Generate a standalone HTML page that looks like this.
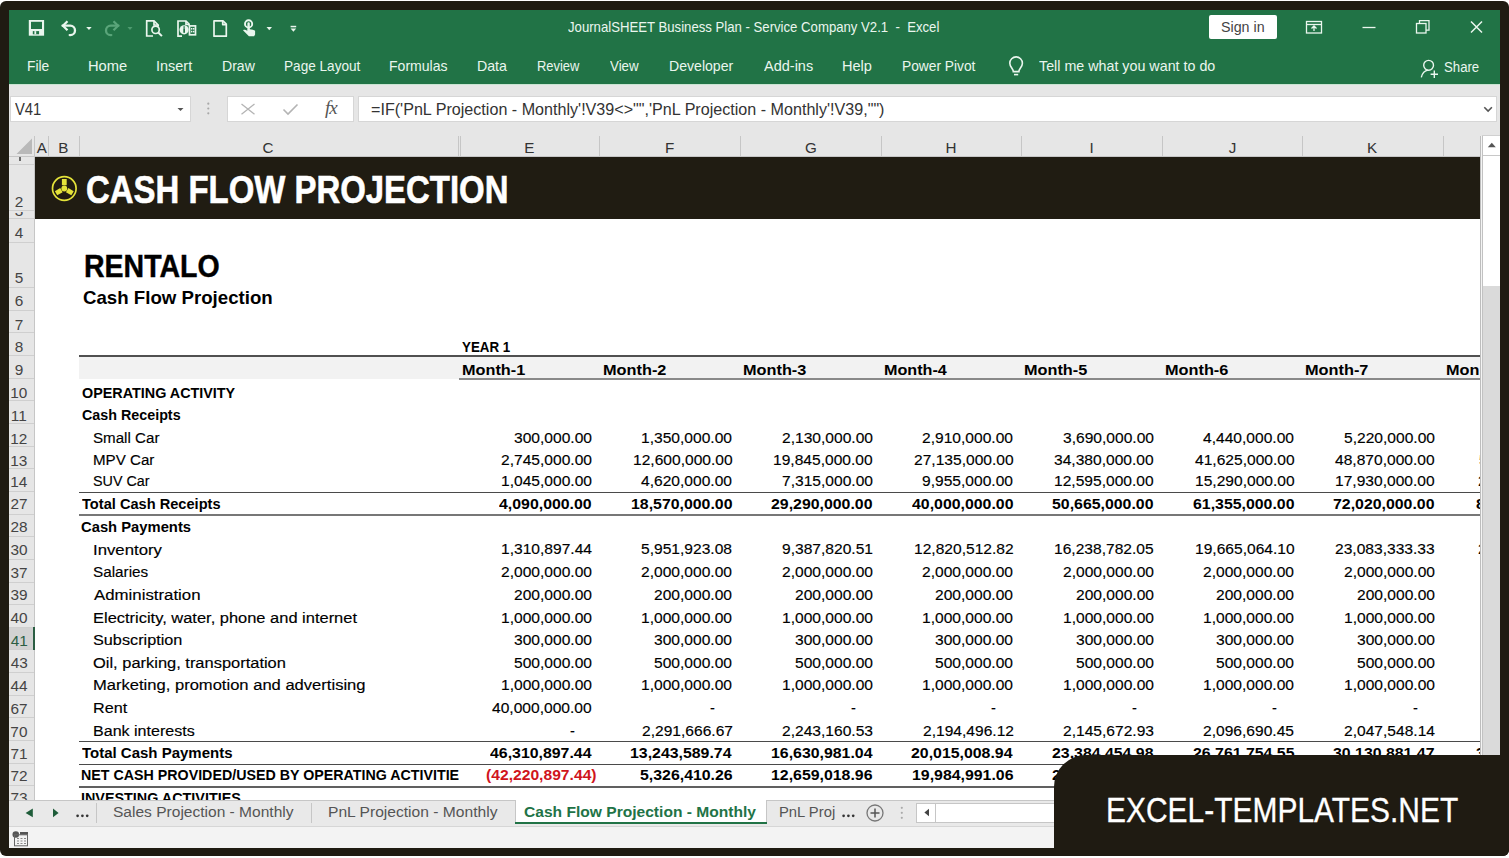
<!DOCTYPE html><html><head><meta charset="utf-8"><style>
html,body{margin:0;padding:0;}
body{width:1509px;height:858px;position:relative;overflow:hidden;background:#fff;font-family:"Liberation Sans",sans-serif;}
body div,body svg{position:absolute;}
.t{white-space:pre;transform-origin:0 0;}
</style></head><body>
<div style="left:0;top:1px;width:1509px;height:855px;background:#1f1b12;border-radius:6px;"></div>
<div style="left:9px;top:10px;width:1491px;height:74px;background:#217346;"></div>
<div style="left:9px;top:84px;width:1491px;height:1px;background:#c9e4d2;"></div>
<div style="left:9px;top:85px;width:1491px;height:72px;background:#e6e6e6;"></div>
<svg style="left:0;top:0" width="320" height="45" viewBox="0 0 320 45">
<rect x="28.8" y="20" width="15.3" height="15.7" fill="#eaf6ee"/>
<rect x="31" y="21.8" width="11" height="7.2" fill="#217346"/>
<rect x="32.8" y="31.1" width="6.3" height="3.2" fill="#217346"/>
<rect x="34.4" y="31.1" width="1.8" height="3.2" fill="#eaf6ee"/>
<g fill="none" stroke="#eaf6ee" stroke-width="2.3">
 <path d="M62.5 25.7h7.8a4.7 4.7 0 0 1 0 9.4h-0.6" stroke-linecap="round"/>
 <path d="M67.5 21.2l-4.6 4.5 4.6 4.5" stroke-linejoin="round"/>
</g>
<path d="M86.2 27.1h5.5l-2.75 3z" fill="#eaf6ee"/>
<g fill="none" stroke="#5aa57a" stroke-width="2.3">
 <path d="M118.5 25.7h-7.8a4.7 4.7 0 0 0 0 9.4h0.6" stroke-linecap="round"/>
 <path d="M113.5 21.2l4.6 4.5-4.6 4.5" stroke-linejoin="round"/>
</g>
<path d="M127.5 27.1h5l-2.5 2.8z" fill="#5aa57a" opacity="0.8"/>
<g fill="none" stroke="#eaf6ee" stroke-width="1.7">
 <path d="M153 36h-6.3v-15.2h7.3l4.2 4.2v1.5"/>
 <path d="M154 21v4h4"/>
 <circle cx="155.6" cy="29.8" r="3.7"/>
 <path d="M158.3 32.5l3.6 3.6" stroke-width="2"/>
</g>
<g fill="none" stroke="#eaf6ee" stroke-width="1.7">
 <path d="M182 36.2h-4v-15.2h8l3 3v1.5"/>
 <path d="M186 21v3.5h3.5"/>
 <rect x="189.5" y="25.9" width="6" height="8.9"/>
</g>
<circle cx="184.1" cy="29.8" r="4.6" fill="#eaf6ee"/>
<rect x="183.3" y="28.3" width="1.7" height="4.5" fill="#217346"/>
<rect x="183.3" y="26.4" width="1.7" height="1.3" fill="#217346"/>
<g fill="#eaf6ee"><rect x="191" y="28" width="1.4" height="1.6"/><rect x="193" y="28" width="1.4" height="1.6"/><rect x="191" y="30.8" width="1.4" height="1.6"/><rect x="193" y="30.8" width="1.4" height="1.6"/></g>
<g fill="none" stroke="#eaf6ee" stroke-width="1.7" stroke-linejoin="round">
 <path d="M214 36.2v-15.3h9l3.3 3.3v12z"/>
 <path d="M222.7 21v3.6h3.6"/>
</g>
<circle cx="248.6" cy="23.9" r="3.6" fill="none" stroke="#eaf6ee" stroke-width="1.9"/>
<rect x="247.4" y="22.3" width="2.4" height="9" rx="1.2" fill="#eaf6ee"/>
<path d="M243 30.3c1.2-0.8 2.8-0.6 4.4 0.6l0.4-2 1.8 0.3c2.2 0.3 4.6 0.8 5.5 1.6v3.8l-1 1.7h-5.2z" fill="#eaf6ee"/>
<path d="M266.5 27h5.5l-2.75 3.2z" fill="#eaf6ee"/>
<rect x="290.6" y="25.8" width="5.6" height="1.5" fill="#eaf6ee"/>
<path d="M290.6 28.5h5.6l-2.8 3.2z" fill="#eaf6ee"/>
</svg>
<div class="t" style="left:568.00px;top:20.13px;font-size:14.783px;line-height:14.783px;transform:scaleX(0.8913);color:#eaf6ee;">JournalSHEET Business Plan - Service Company V2.1  -  Excel</div>
<div style="left:1209px;top:15px;width:68px;height:24px;background:#fff;border-radius:2px;"></div>
<div class="t" style="left:1221.36px;top:20.13px;font-size:14.783px;line-height:14.783px;transform:scaleX(0.9647);color:#444;">Sign in</div>
<svg style="left:1290px;top:10px" width="210" height="35" viewBox="1290 10 210 35">
<g fill="none" stroke="#eaf6ee" stroke-width="1.3">
 <rect x="1306.5" y="21.5" width="15" height="11.5"/>
 <path d="M1306.5 24.5h15"/>
 <path d="M1314 31v-5M1311.5 28.5l2.5-2.5 2.5 2.5"/>
 <path d="M1362.5 27.5h13"/>
 <rect x="1416.5" y="23.5" width="9.5" height="9.5"/>
 <path d="M1419.5 23.5v-2.8h9.5v9.5h-3"/>
 <path d="M1471 21.5l11 11M1482 21.5l-11 11" stroke-width="1.5"/>
</g>
</svg>
<div class="t" style="left:27.20px;top:58.17px;font-size:15.217px;line-height:15.217px;transform:scaleX(0.9072);color:#eaf6ee;">File</div>
<div class="t" style="left:88.42px;top:58.17px;font-size:15.217px;line-height:15.217px;transform:scaleX(0.9676);color:#eaf6ee;">Home</div>
<div class="t" style="left:156.20px;top:58.17px;font-size:15.217px;line-height:15.217px;transform:scaleX(0.9509);color:#eaf6ee;">Insert</div>
<div class="t" style="left:221.67px;top:58.17px;font-size:15.217px;line-height:15.217px;transform:scaleX(0.9267);color:#eaf6ee;">Draw</div>
<div class="t" style="left:283.91px;top:58.17px;font-size:15.217px;line-height:15.217px;transform:scaleX(0.8948);color:#eaf6ee;">Page Layout</div>
<div class="t" style="left:389.28px;top:58.17px;font-size:15.217px;line-height:15.217px;transform:scaleX(0.9237);color:#eaf6ee;">Formulas</div>
<div class="t" style="left:477.07px;top:58.17px;font-size:15.217px;line-height:15.217px;transform:scaleX(0.9323);color:#eaf6ee;">Data</div>
<div class="t" style="left:537.17px;top:58.17px;font-size:15.217px;line-height:15.217px;transform:scaleX(0.8502);color:#eaf6ee;">Review</div>
<div class="t" style="left:609.93px;top:58.17px;font-size:15.217px;line-height:15.217px;transform:scaleX(0.8762);color:#eaf6ee;">View</div>
<div class="t" style="left:668.67px;top:58.17px;font-size:15.217px;line-height:15.217px;transform:scaleX(0.9268);color:#eaf6ee;">Developer</div>
<div class="t" style="left:763.50px;top:58.17px;font-size:15.217px;line-height:15.217px;transform:scaleX(0.9539);color:#eaf6ee;">Add-ins</div>
<div class="t" style="left:841.83px;top:58.17px;font-size:15.217px;line-height:15.217px;transform:scaleX(0.9577);color:#eaf6ee;">Help</div>
<div class="t" style="left:901.60px;top:58.17px;font-size:15.217px;line-height:15.217px;transform:scaleX(0.9050);color:#eaf6ee;">Power Pivot</div>
<div class="t" style="left:1038.61px;top:58.17px;font-size:15.217px;line-height:15.217px;transform:scaleX(0.9397);color:#eaf6ee;">Tell me what you want to do</div>
<div class="t" style="left:1444.41px;top:58.99px;font-size:15.072px;line-height:15.072px;transform:scaleX(0.8760);color:#eaf6ee;">Share</div>
<svg style="left:1000px;top:50px" width="500" height="34" viewBox="1000 50 500 34">
<g fill="none" stroke="#eaf6ee" stroke-width="1.4">
 <path d="M1013.3 71.6c0-2.8-3.5-4.6-3.5-8.4a6.3 6.3 0 0 1 12.6 0c0 3.8-3.5 5.6-3.5 8.4z" stroke-width="1.6"/>
 <path d="M1014 74.6h4.2" stroke-width="1.6"/>
 <circle cx="1428.6" cy="65.3" r="4.9"/>
 <path d="M1421.3 77.3c1-4.2 3.6-6.8 6.8-7.2"/>
 <path d="M1434.3 70.6v7.4M1430.6 74.3h7.4"/>
</g>
</svg>
<div style="left:10px;top:96px;width:181px;height:26px;background:#fff;box-sizing:border-box;border:1px solid #d6d6d6;"></div>
<div class="t" style="left:14.93px;top:102.07px;font-size:15.797px;line-height:15.797px;transform:scaleX(0.9367);color:#333;">V41</div>
<svg style="left:170px;top:96px" width="30" height="26" viewBox="170 96 30 26"><path d="M177.5 108h6l-3 3z" fill="#555"/></svg>
<svg style="left:200px;top:96px" width="20" height="26" viewBox="200 96 20 26"><g fill="#a8a8a8"><circle cx="208.3" cy="103.7" r="1.1"/><circle cx="208.3" cy="108.5" r="1.1"/><circle cx="208.3" cy="113.3" r="1.1"/></g></svg>
<div style="left:227px;top:96px;width:127px;height:26px;background:#fff;box-sizing:border-box;border:1px solid #d6d6d6;"></div>
<svg style="left:227px;top:96px" width="128" height="26" viewBox="227 96 128 26"><g fill="none" stroke="#b4b4b4" stroke-width="1.3"><path d="M241.5 104l13 10.2M254.5 104l-13 10.2"/><path d="M283.5 109.5l4.5 4.5 9.5-9.5" stroke-width="1.6"/></g></svg>
<div class="t" style="left:325px;top:96px;font-family:'Liberation Serif',serif;font-style:italic;font-size:19px;line-height:24px;color:#555;letter-spacing:-1px;">fx</div>
<div style="left:358px;top:96px;width:1139px;height:26px;background:#fff;box-sizing:border-box;border:1px solid #d6d6d6;"></div>
<div class="t" style="left:370.69px;top:101.85px;font-size:15.942px;line-height:15.942px;transform:scaleX(1.0108);color:#333;">=IF('PnL Projection - Monthly'!V39&lt;&gt;&quot;&quot;,'PnL Projection - Monthly'!V39,&quot;&quot;)</div>
<svg style="left:1475px;top:100px" width="20" height="20" viewBox="1475 100 20 20"><path d="M1484.3 107.3l3.8 3.8 3.8-3.8" fill="none" stroke="#555" stroke-width="1.6"/></svg>
<svg style="left:9px;top:136px" width="27" height="22" viewBox="9 136 27 22"><path d="M32 138.5v15.5h-15.5z" fill="#b9b9b9"/></svg>
<div style="left:34px;top:136px;width:1px;height:21px;background:#c6c6c6;"></div>
<div style="left:48px;top:136px;width:1px;height:21px;background:#c6c6c6;"></div>
<div style="left:79px;top:136px;width:1px;height:21px;background:#c6c6c6;"></div>
<div style="left:458px;top:136px;width:1px;height:21px;background:#c6c6c6;"></div>
<div style="left:460px;top:136px;width:1px;height:21px;background:#c6c6c6;"></div>
<div style="left:599px;top:136px;width:1px;height:21px;background:#c6c6c6;"></div>
<div style="left:740px;top:136px;width:1px;height:21px;background:#c6c6c6;"></div>
<div style="left:881px;top:136px;width:1px;height:21px;background:#c6c6c6;"></div>
<div style="left:1021px;top:136px;width:1px;height:21px;background:#c6c6c6;"></div>
<div style="left:1162px;top:136px;width:1px;height:21px;background:#c6c6c6;"></div>
<div style="left:1302px;top:136px;width:1px;height:21px;background:#c6c6c6;"></div>
<div style="left:1443px;top:136px;width:1px;height:21px;background:#c6c6c6;"></div>
<div class="t" style="left:36.64px;top:140.07px;font-size:15.217px;line-height:15.217px;transform:scaleX(1.0000);color:#333;">A</div>
<div class="t" style="left:58.21px;top:140.07px;font-size:15.217px;line-height:15.217px;transform:scaleX(1.0000);color:#333;">B</div>
<div class="t" style="left:262.41px;top:140.07px;font-size:15.217px;line-height:15.217px;transform:scaleX(1.0000);color:#333;">C</div>
<div class="t" style="left:524.14px;top:140.07px;font-size:15.217px;line-height:15.217px;transform:scaleX(1.0000);color:#333;">E</div>
<div class="t" style="left:665.05px;top:140.07px;font-size:15.217px;line-height:15.217px;transform:scaleX(1.0000);color:#333;">F</div>
<div class="t" style="left:804.96px;top:140.07px;font-size:15.217px;line-height:15.217px;transform:scaleX(1.0000);color:#333;">G</div>
<div class="t" style="left:945.52px;top:140.07px;font-size:15.217px;line-height:15.217px;transform:scaleX(1.0000);color:#333;">H</div>
<div class="t" style="left:1089.41px;top:140.07px;font-size:15.217px;line-height:15.217px;transform:scaleX(1.0000);color:#333;">I</div>
<div class="t" style="left:1228.65px;top:140.07px;font-size:15.217px;line-height:15.217px;transform:scaleX(1.0000);color:#333;">J</div>
<div class="t" style="left:1367.11px;top:140.07px;font-size:15.217px;line-height:15.217px;transform:scaleX(1.0000);color:#333;">K</div>
<div style="left:9px;top:156px;width:1471px;height:1px;background:#c6c6c6;"></div>
<div style="left:9px;top:157px;width:26px;height:643px;background:#e6e6e6;"></div>
<div style="left:34px;top:157px;width:1px;height:643px;background:#c6c6c6;"></div>
<div style="left:35px;top:157px;width:1445px;height:643px;background:#fff;"></div>
<div style="left:35px;top:157px;width:1445px;height:62px;background:#201c12;"></div>
<div style="left:9px;top:164px;width:25px;height:1px;background:#cfcfcf;"></div>
<div style="left:9px;top:210px;width:25px;height:1px;background:#cfcfcf;"></div>
<div style="left:9px;top:218px;width:25px;height:1px;background:#cfcfcf;"></div>
<div style="left:9px;top:242px;width:25px;height:1px;background:#cfcfcf;"></div>
<div style="left:9px;top:287px;width:25px;height:1px;background:#cfcfcf;"></div>
<div style="left:9px;top:310px;width:25px;height:1px;background:#cfcfcf;"></div>
<div style="left:9px;top:332px;width:25px;height:1px;background:#cfcfcf;"></div>
<div style="left:9px;top:355px;width:25px;height:1px;background:#cfcfcf;"></div>
<div style="left:9px;top:378px;width:25px;height:1px;background:#cfcfcf;"></div>
<div style="left:9px;top:400px;width:25px;height:1px;background:#cfcfcf;"></div>
<div style="left:9px;top:423px;width:25px;height:1px;background:#cfcfcf;"></div>
<div style="left:9px;top:446px;width:25px;height:1px;background:#cfcfcf;"></div>
<div style="left:9px;top:468px;width:25px;height:1px;background:#cfcfcf;"></div>
<div style="left:9px;top:491px;width:25px;height:1px;background:#cfcfcf;"></div>
<div style="left:9px;top:514px;width:25px;height:1px;background:#cfcfcf;"></div>
<div style="left:9px;top:536px;width:25px;height:1px;background:#cfcfcf;"></div>
<div style="left:9px;top:559px;width:25px;height:1px;background:#cfcfcf;"></div>
<div style="left:9px;top:582px;width:25px;height:1px;background:#cfcfcf;"></div>
<div style="left:9px;top:604px;width:25px;height:1px;background:#cfcfcf;"></div>
<div style="left:9px;top:627px;width:25px;height:1px;background:#cfcfcf;"></div>
<div style="left:9px;top:649px;width:25px;height:1px;background:#cfcfcf;"></div>
<div style="left:9px;top:672px;width:25px;height:1px;background:#cfcfcf;"></div>
<div style="left:9px;top:695px;width:25px;height:1px;background:#cfcfcf;"></div>
<div style="left:9px;top:717px;width:25px;height:1px;background:#cfcfcf;"></div>
<div style="left:9px;top:740px;width:25px;height:1px;background:#cfcfcf;"></div>
<div style="left:9px;top:763px;width:25px;height:1px;background:#cfcfcf;"></div>
<div style="left:9px;top:785px;width:25px;height:1px;background:#cfcfcf;"></div>
<div style="left:9px;top:628px;width:25px;height:21px;background:#d2d2d2;"></div>
<div style="left:33px;top:627px;width:2px;height:23px;background:#2b5e43;"></div>
<div style="left:19px;top:157px;width:2px;height:4px;background:#6a6a6a;"></div>
<div class="t" style="left:14.74px;top:194.24px;font-size:15.362px;line-height:15.362px;transform:scaleX(1.0000);color:#444;">2</div>
<div style="left:9px;top:211.5px;width:25px;height:6.5px;overflow:hidden;"><div class="t" style="left:5.74px;top:-8.56px;font-size:15.362px;line-height:15.362px;transform:scaleX(1.0000);color:#444;">3</div></div>
<div class="t" style="left:14.81px;top:225.14px;font-size:15.362px;line-height:15.362px;transform:scaleX(1.0000);color:#444;">4</div>
<div class="t" style="left:14.74px;top:270.44px;font-size:15.362px;line-height:15.362px;transform:scaleX(1.0000);color:#444;">5</div>
<div class="t" style="left:14.66px;top:293.44px;font-size:15.362px;line-height:15.362px;transform:scaleX(1.0000);color:#444;">6</div>
<div class="t" style="left:14.74px;top:316.64px;font-size:15.362px;line-height:15.362px;transform:scaleX(1.0000);color:#444;">7</div>
<div class="t" style="left:14.70px;top:338.94px;font-size:15.362px;line-height:15.362px;transform:scaleX(1.0000);color:#444;">8</div>
<div class="t" style="left:14.74px;top:362.04px;font-size:15.362px;line-height:15.362px;transform:scaleX(1.0000);color:#444;">9</div>
<div class="t" style="left:10.17px;top:384.94px;font-size:15.362px;line-height:15.362px;transform:scaleX(1.0000);color:#444;">10</div>
<div class="t" style="left:10.82px;top:407.84px;font-size:15.362px;line-height:15.362px;transform:scaleX(1.0000);color:#444;">11</div>
<div class="t" style="left:10.28px;top:430.74px;font-size:15.362px;line-height:15.362px;transform:scaleX(1.0000);color:#444;">12</div>
<div class="t" style="left:10.21px;top:452.84px;font-size:15.362px;line-height:15.362px;transform:scaleX(1.0000);color:#444;">13</div>
<div class="t" style="left:10.13px;top:473.74px;font-size:15.362px;line-height:15.362px;transform:scaleX(1.0000);color:#444;">14</div>
<div class="t" style="left:10.47px;top:496.34px;font-size:15.362px;line-height:15.362px;transform:scaleX(1.0000);color:#444;">27</div>
<div class="t" style="left:10.40px;top:519.14px;font-size:15.362px;line-height:15.362px;transform:scaleX(1.0000);color:#444;">28</div>
<div class="t" style="left:10.44px;top:542.04px;font-size:15.362px;line-height:15.362px;transform:scaleX(1.0000);color:#444;">30</div>
<div class="t" style="left:10.55px;top:564.54px;font-size:15.362px;line-height:15.362px;transform:scaleX(1.0000);color:#444;">37</div>
<div class="t" style="left:10.51px;top:587.14px;font-size:15.362px;line-height:15.362px;transform:scaleX(1.0000);color:#444;">39</div>
<div class="t" style="left:10.59px;top:610.24px;font-size:15.362px;line-height:15.362px;transform:scaleX(1.0000);color:#444;">40</div>
<div class="t" style="left:10.67px;top:632.84px;font-size:15.362px;line-height:15.362px;transform:scaleX(1.0000);color:#2b5e43;">41</div>
<div class="t" style="left:10.63px;top:655.34px;font-size:15.362px;line-height:15.362px;transform:scaleX(1.0000);color:#444;">43</div>
<div class="t" style="left:10.55px;top:677.84px;font-size:15.362px;line-height:15.362px;transform:scaleX(1.0000);color:#444;">44</div>
<div class="t" style="left:10.47px;top:700.64px;font-size:15.362px;line-height:15.362px;transform:scaleX(1.0000);color:#444;">67</div>
<div class="t" style="left:10.36px;top:723.54px;font-size:15.362px;line-height:15.362px;transform:scaleX(1.0000);color:#444;">70</div>
<div class="t" style="left:10.44px;top:745.64px;font-size:15.362px;line-height:15.362px;transform:scaleX(1.0000);color:#444;">71</div>
<div class="t" style="left:10.47px;top:767.84px;font-size:15.362px;line-height:15.362px;transform:scaleX(1.0000);color:#444;">72</div>
<div style="left:9px;top:786px;width:25px;height:14px;overflow:hidden;"><div class="t" style="left:1.40px;top:4.34px;font-size:15.362px;line-height:15.362px;transform:scaleX(1.0000);color:#444;">73</div></div>
<svg style="left:45px;top:170px" width="40" height="40" viewBox="45 170 40 40"><circle cx="64.3" cy="188.5" r="11.8" fill="none" stroke="#e4e33a" stroke-width="1.7"/><g fill="#e4e33a"><circle cx="64.3" cy="188.5" r="2.9"/><rect x="61.9" y="179" width="4.8" height="6.2" transform="rotate(0 64.3 188.5)"/><rect x="61.9" y="179" width="4.8" height="6.2" transform="rotate(120 64.3 188.5)"/><rect x="61.9" y="179" width="4.8" height="6.2" transform="rotate(240 64.3 188.5)"/></g></svg>
<div class="t" style="left:85.68px;top:170.93px;font-size:38.406px;line-height:38.406px;transform:scaleX(0.8574);color:#fff;font-weight:bold;-webkit-text-stroke:0.6px #fff;">CASH FLOW PROJECTION</div>
<div class="t" style="left:84.15px;top:251.61px;font-size:30.870px;line-height:30.870px;transform:scaleX(0.9238);color:#000;font-weight:bold;-webkit-text-stroke:0.4px #000;">RENTALO</div>
<div class="t" style="left:83.25px;top:288.57px;font-size:18.406px;line-height:18.406px;transform:scaleX(1.0148);color:#000;font-weight:bold;">Cash Flow Projection</div>
<div style="left:79px;top:355px;width:1401px;height:2px;background:#505050;"></div>
<div style="left:79px;top:357px;width:1401px;height:22px;background:#f2f2f2;"></div>
<div style="left:459px;top:378px;width:1021px;height:2px;background:#8a8a8a;"></div>
<div class="t" style="left:462.33px;top:339.88px;font-size:14.493px;line-height:14.493px;transform:scaleX(0.9232);color:#000;font-weight:bold;">YEAR 1</div>
<div style="left:79px;top:358px;width:1400px;height:21px;overflow:hidden;"><div class="t" style="left:382.54px;top:5.38px;font-size:14.493px;line-height:14.493px;transform:scaleX(1.1218);color:#000;font-weight:bold;">Month-1</div></div>
<div style="left:79px;top:358px;width:1400px;height:21px;overflow:hidden;"><div class="t" style="left:523.54px;top:5.38px;font-size:14.493px;line-height:14.493px;transform:scaleX(1.1263);color:#000;font-weight:bold;">Month-2</div></div>
<div style="left:79px;top:358px;width:1400px;height:21px;overflow:hidden;"><div class="t" style="left:664.04px;top:5.38px;font-size:14.493px;line-height:14.493px;transform:scaleX(1.1248);color:#000;font-weight:bold;">Month-3</div></div>
<div style="left:79px;top:358px;width:1400px;height:21px;overflow:hidden;"><div class="t" style="left:804.55px;top:5.38px;font-size:14.493px;line-height:14.493px;transform:scaleX(1.1159);color:#000;font-weight:bold;">Month-4</div></div>
<div style="left:79px;top:358px;width:1400px;height:21px;overflow:hidden;"><div class="t" style="left:945.04px;top:5.38px;font-size:14.493px;line-height:14.493px;transform:scaleX(1.1218);color:#000;font-weight:bold;">Month-5</div></div>
<div style="left:79px;top:358px;width:1400px;height:21px;overflow:hidden;"><div class="t" style="left:1085.54px;top:5.38px;font-size:14.493px;line-height:14.493px;transform:scaleX(1.1248);color:#000;font-weight:bold;">Month-6</div></div>
<div style="left:79px;top:358px;width:1400px;height:21px;overflow:hidden;"><div class="t" style="left:1226.04px;top:5.38px;font-size:14.493px;line-height:14.493px;transform:scaleX(1.1263);color:#000;font-weight:bold;">Month-7</div></div>
<div style="left:79px;top:358px;width:1400px;height:21px;overflow:hidden;"><div class="t" style="left:1366.94px;top:5.38px;font-size:14.493px;line-height:14.493px;transform:scaleX(1.1233);color:#000;font-weight:bold;">Month-8</div></div>
<div class="t" style="left:81.93px;top:385.56px;font-size:14.638px;line-height:14.638px;transform:scaleX(0.9819);color:#000;font-weight:bold;">OPERATING ACTIVITY</div>
<div class="t" style="left:81.93px;top:408.46px;font-size:14.638px;line-height:14.638px;transform:scaleX(0.9781);color:#000;font-weight:bold;">Cash Receipts</div>
<div class="t" style="left:93.32px;top:431.36px;font-size:14.638px;line-height:14.638px;transform:scaleX(1.0346);color:#000;-webkit-text-stroke:0.15px #000;">Small Car</div>
<div class="t" style="left:92.79px;top:453.46px;font-size:14.638px;line-height:14.638px;transform:scaleX(1.0351);color:#000;-webkit-text-stroke:0.15px #000;">MPV Car</div>
<div class="t" style="left:93.36px;top:474.36px;font-size:14.638px;line-height:14.638px;transform:scaleX(0.9790);color:#000;-webkit-text-stroke:0.15px #000;">SUV Car</div>
<div class="t" style="left:82.35px;top:496.96px;font-size:14.638px;line-height:14.638px;transform:scaleX(0.9992);color:#000;font-weight:bold;">Total Cash Receipts</div>
<div class="t" style="left:81.41px;top:519.76px;font-size:14.638px;line-height:14.638px;transform:scaleX(1.0101);color:#000;font-weight:bold;">Cash Payments</div>
<div class="t" style="left:93.19px;top:542.66px;font-size:14.638px;line-height:14.638px;transform:scaleX(1.1457);color:#000;-webkit-text-stroke:0.15px #000;">Inventory</div>
<div class="t" style="left:93.31px;top:565.16px;font-size:14.638px;line-height:14.638px;transform:scaleX(1.0436);color:#000;-webkit-text-stroke:0.15px #000;">Salaries</div>
<div class="t" style="left:94.00px;top:587.76px;font-size:14.638px;line-height:14.638px;transform:scaleX(1.1495);color:#000;-webkit-text-stroke:0.15px #000;">Administration</div>
<div class="t" style="left:92.68px;top:610.86px;font-size:14.638px;line-height:14.638px;transform:scaleX(1.1249);color:#000;-webkit-text-stroke:0.15px #000;">Electricity, water, phone and internet</div>
<div class="t" style="left:93.27px;top:633.46px;font-size:14.638px;line-height:14.638px;transform:scaleX(1.1103);color:#000;-webkit-text-stroke:0.15px #000;">Subscription</div>
<div class="t" style="left:93.26px;top:655.96px;font-size:14.638px;line-height:14.638px;transform:scaleX(1.1246);color:#000;-webkit-text-stroke:0.15px #000;">Oil, parking, transportation</div>
<div class="t" style="left:92.67px;top:678.46px;font-size:14.638px;line-height:14.638px;transform:scaleX(1.1325);color:#000;-webkit-text-stroke:0.15px #000;">Marketing, promotion and advertising</div>
<div class="t" style="left:92.70px;top:701.26px;font-size:14.638px;line-height:14.638px;transform:scaleX(1.1066);color:#000;-webkit-text-stroke:0.15px #000;">Rent</div>
<div class="t" style="left:92.72px;top:724.16px;font-size:14.638px;line-height:14.638px;transform:scaleX(1.0972);color:#000;-webkit-text-stroke:0.15px #000;">Bank interests</div>
<div class="t" style="left:81.85px;top:746.26px;font-size:14.638px;line-height:14.638px;transform:scaleX(1.0251);color:#000;font-weight:bold;">Total Cash Payments</div>
<div style="left:79px;top:764px;width:379.5px;height:22px;overflow:hidden;"><div class="t" style="left:2.07px;top:4.46px;font-size:14.638px;line-height:14.638px;transform:scaleX(0.9741);color:#000;font-weight:bold;">NET CASH PROVIDED/USED BY OPERATING ACTIVITIES</div></div>
<div style="left:79px;top:787px;width:379px;height:13px;overflow:hidden;"><div class="t" style="left:2.07px;top:3.96px;font-size:14.638px;line-height:14.638px;transform:scaleX(0.9817);color:#000;font-weight:bold;">INVESTING ACTIVITIES</div></div>
<div style="left:79px;top:492px;width:1401px;height:1px;background:#4a4a4a;"></div>
<div style="left:79px;top:514px;width:1401px;height:2px;background:#777;"></div>
<div style="left:79px;top:741px;width:1401px;height:1px;background:#4a4a4a;"></div>
<div style="left:79px;top:764px;width:1401px;height:1px;background:#4a4a4a;"></div>
<div style="left:79px;top:786px;width:1401px;height:2px;background:#606060;"></div>
<div style="left:79px;top:0px;width:1401px;height:858px;overflow:hidden;"><div class="t" style="left:434.87px;top:431.11px;font-size:14.928px;line-height:14.928px;transform:scaleX(1.0450);color:#000;-webkit-text-stroke:0.15px #000;">300,000.00</div></div>
<div style="left:79px;top:0px;width:1401px;height:858px;overflow:hidden;"><div class="t" style="left:562.35px;top:431.11px;font-size:14.928px;line-height:14.928px;transform:scaleX(1.0450);color:#000;-webkit-text-stroke:0.15px #000;">1,350,000.00</div></div>
<div style="left:79px;top:0px;width:1401px;height:858px;overflow:hidden;"><div class="t" style="left:702.85px;top:431.11px;font-size:14.928px;line-height:14.928px;transform:scaleX(1.0450);color:#000;-webkit-text-stroke:0.15px #000;">2,130,000.00</div></div>
<div style="left:79px;top:0px;width:1401px;height:858px;overflow:hidden;"><div class="t" style="left:843.35px;top:431.11px;font-size:14.928px;line-height:14.928px;transform:scaleX(1.0450);color:#000;-webkit-text-stroke:0.15px #000;">2,910,000.00</div></div>
<div style="left:79px;top:0px;width:1401px;height:858px;overflow:hidden;"><div class="t" style="left:983.85px;top:431.11px;font-size:14.928px;line-height:14.928px;transform:scaleX(1.0450);color:#000;-webkit-text-stroke:0.15px #000;">3,690,000.00</div></div>
<div style="left:79px;top:0px;width:1401px;height:858px;overflow:hidden;"><div class="t" style="left:1124.35px;top:431.11px;font-size:14.928px;line-height:14.928px;transform:scaleX(1.0450);color:#000;-webkit-text-stroke:0.15px #000;">4,440,000.00</div></div>
<div style="left:79px;top:0px;width:1401px;height:858px;overflow:hidden;"><div class="t" style="left:1264.85px;top:431.11px;font-size:14.928px;line-height:14.928px;transform:scaleX(1.0450);color:#000;-webkit-text-stroke:0.15px #000;">5,220,000.00</div></div>
<div style="left:79px;top:0px;width:1401px;height:858px;overflow:hidden;"><div class="t" style="left:1407.85px;top:431.11px;font-size:14.928px;line-height:14.928px;transform:scaleX(1.0450);color:#000;-webkit-text-stroke:0.15px #000;">6,000,000.00</div></div>
<div style="left:79px;top:0px;width:1401px;height:858px;overflow:hidden;"><div class="t" style="left:421.85px;top:453.21px;font-size:14.928px;line-height:14.928px;transform:scaleX(1.0450);color:#000;-webkit-text-stroke:0.15px #000;">2,745,000.00</div></div>
<div style="left:79px;top:0px;width:1401px;height:858px;overflow:hidden;"><div class="t" style="left:553.69px;top:453.21px;font-size:14.928px;line-height:14.928px;transform:scaleX(1.0450);color:#000;-webkit-text-stroke:0.15px #000;">12,600,000.00</div></div>
<div style="left:79px;top:0px;width:1401px;height:858px;overflow:hidden;"><div class="t" style="left:694.19px;top:453.21px;font-size:14.928px;line-height:14.928px;transform:scaleX(1.0450);color:#000;-webkit-text-stroke:0.15px #000;">19,845,000.00</div></div>
<div style="left:79px;top:0px;width:1401px;height:858px;overflow:hidden;"><div class="t" style="left:834.69px;top:453.21px;font-size:14.928px;line-height:14.928px;transform:scaleX(1.0450);color:#000;-webkit-text-stroke:0.15px #000;">27,135,000.00</div></div>
<div style="left:79px;top:0px;width:1401px;height:858px;overflow:hidden;"><div class="t" style="left:975.19px;top:453.21px;font-size:14.928px;line-height:14.928px;transform:scaleX(1.0450);color:#000;-webkit-text-stroke:0.15px #000;">34,380,000.00</div></div>
<div style="left:79px;top:0px;width:1401px;height:858px;overflow:hidden;"><div class="t" style="left:1115.69px;top:453.21px;font-size:14.928px;line-height:14.928px;transform:scaleX(1.0450);color:#000;-webkit-text-stroke:0.15px #000;">41,625,000.00</div></div>
<div style="left:79px;top:0px;width:1401px;height:858px;overflow:hidden;"><div class="t" style="left:1256.19px;top:453.21px;font-size:14.928px;line-height:14.928px;transform:scaleX(1.0450);color:#000;-webkit-text-stroke:0.15px #000;">48,870,000.00</div></div>
<div style="left:79px;top:0px;width:1401px;height:858px;overflow:hidden;"><div class="t" style="left:1400.36px;top:453.21px;font-size:14.928px;line-height:14.928px;transform:scaleX(1.0450);color:#000;-webkit-text-stroke:0.15px #000;">56,115,000.00</div></div>
<div style="left:79px;top:0px;width:1401px;height:858px;overflow:hidden;"><div class="t" style="left:421.85px;top:474.11px;font-size:14.928px;line-height:14.928px;transform:scaleX(1.0450);color:#000;-webkit-text-stroke:0.15px #000;">1,045,000.00</div></div>
<div style="left:79px;top:0px;width:1401px;height:858px;overflow:hidden;"><div class="t" style="left:562.35px;top:474.11px;font-size:14.928px;line-height:14.928px;transform:scaleX(1.0450);color:#000;-webkit-text-stroke:0.15px #000;">4,620,000.00</div></div>
<div style="left:79px;top:0px;width:1401px;height:858px;overflow:hidden;"><div class="t" style="left:702.85px;top:474.11px;font-size:14.928px;line-height:14.928px;transform:scaleX(1.0450);color:#000;-webkit-text-stroke:0.15px #000;">7,315,000.00</div></div>
<div style="left:79px;top:0px;width:1401px;height:858px;overflow:hidden;"><div class="t" style="left:843.35px;top:474.11px;font-size:14.928px;line-height:14.928px;transform:scaleX(1.0450);color:#000;-webkit-text-stroke:0.15px #000;">9,955,000.00</div></div>
<div style="left:79px;top:0px;width:1401px;height:858px;overflow:hidden;"><div class="t" style="left:975.19px;top:474.11px;font-size:14.928px;line-height:14.928px;transform:scaleX(1.0450);color:#000;-webkit-text-stroke:0.15px #000;">12,595,000.00</div></div>
<div style="left:79px;top:0px;width:1401px;height:858px;overflow:hidden;"><div class="t" style="left:1115.69px;top:474.11px;font-size:14.928px;line-height:14.928px;transform:scaleX(1.0450);color:#000;-webkit-text-stroke:0.15px #000;">15,290,000.00</div></div>
<div style="left:79px;top:0px;width:1401px;height:858px;overflow:hidden;"><div class="t" style="left:1256.19px;top:474.11px;font-size:14.928px;line-height:14.928px;transform:scaleX(1.0450);color:#000;-webkit-text-stroke:0.15px #000;">17,930,000.00</div></div>
<div style="left:79px;top:0px;width:1401px;height:858px;overflow:hidden;"><div class="t" style="left:1399.19px;top:474.11px;font-size:14.928px;line-height:14.928px;transform:scaleX(1.0450);color:#000;-webkit-text-stroke:0.15px #000;">20,570,000.00</div></div>
<div style="left:79px;top:0px;width:1401px;height:858px;overflow:hidden;"><div class="t" style="left:420.19px;top:496.71px;font-size:14.928px;line-height:14.928px;transform:scaleX(1.0650);color:#000;font-weight:bold;">4,090,000.00</div></div>
<div style="left:79px;top:0px;width:1401px;height:858px;overflow:hidden;"><div class="t" style="left:551.87px;top:496.71px;font-size:14.928px;line-height:14.928px;transform:scaleX(1.0650);color:#000;font-weight:bold;">18,570,000.00</div></div>
<div style="left:79px;top:0px;width:1401px;height:858px;overflow:hidden;"><div class="t" style="left:692.37px;top:496.71px;font-size:14.928px;line-height:14.928px;transform:scaleX(1.0650);color:#000;font-weight:bold;">29,290,000.00</div></div>
<div style="left:79px;top:0px;width:1401px;height:858px;overflow:hidden;"><div class="t" style="left:832.87px;top:496.71px;font-size:14.928px;line-height:14.928px;transform:scaleX(1.0650);color:#000;font-weight:bold;">40,000,000.00</div></div>
<div style="left:79px;top:0px;width:1401px;height:858px;overflow:hidden;"><div class="t" style="left:973.37px;top:496.71px;font-size:14.928px;line-height:14.928px;transform:scaleX(1.0650);color:#000;font-weight:bold;">50,665,000.00</div></div>
<div style="left:79px;top:0px;width:1401px;height:858px;overflow:hidden;"><div class="t" style="left:1113.87px;top:496.71px;font-size:14.928px;line-height:14.928px;transform:scaleX(1.0650);color:#000;font-weight:bold;">61,355,000.00</div></div>
<div style="left:79px;top:0px;width:1401px;height:858px;overflow:hidden;"><div class="t" style="left:1254.37px;top:496.71px;font-size:14.928px;line-height:14.928px;transform:scaleX(1.0650);color:#000;font-weight:bold;">72,020,000.00</div></div>
<div style="left:79px;top:0px;width:1401px;height:858px;overflow:hidden;"><div class="t" style="left:1397.37px;top:496.71px;font-size:14.928px;line-height:14.928px;transform:scaleX(1.0650);color:#000;font-weight:bold;">82,685,000.00</div></div>
<div style="left:79px;top:0px;width:1401px;height:858px;overflow:hidden;"><div class="t" style="left:421.77px;top:542.41px;font-size:14.928px;line-height:14.928px;transform:scaleX(1.0450);color:#000;-webkit-text-stroke:0.15px #000;">1,310,897.44</div></div>
<div style="left:79px;top:0px;width:1401px;height:858px;overflow:hidden;"><div class="t" style="left:562.42px;top:542.41px;font-size:14.928px;line-height:14.928px;transform:scaleX(1.0450);color:#000;-webkit-text-stroke:0.15px #000;">5,951,923.08</div></div>
<div style="left:79px;top:0px;width:1401px;height:858px;overflow:hidden;"><div class="t" style="left:703.00px;top:542.41px;font-size:14.928px;line-height:14.928px;transform:scaleX(1.0450);color:#000;-webkit-text-stroke:0.15px #000;">9,387,820.51</div></div>
<div style="left:79px;top:0px;width:1401px;height:858px;overflow:hidden;"><div class="t" style="left:834.92px;top:542.41px;font-size:14.928px;line-height:14.928px;transform:scaleX(1.0450);color:#000;-webkit-text-stroke:0.15px #000;">12,820,512.82</div></div>
<div style="left:79px;top:0px;width:1401px;height:858px;overflow:hidden;"><div class="t" style="left:975.27px;top:542.41px;font-size:14.928px;line-height:14.928px;transform:scaleX(1.0450);color:#000;-webkit-text-stroke:0.15px #000;">16,238,782.05</div></div>
<div style="left:79px;top:0px;width:1401px;height:858px;overflow:hidden;"><div class="t" style="left:1115.69px;top:542.41px;font-size:14.928px;line-height:14.928px;transform:scaleX(1.0450);color:#000;-webkit-text-stroke:0.15px #000;">19,665,064.10</div></div>
<div style="left:79px;top:0px;width:1401px;height:858px;overflow:hidden;"><div class="t" style="left:1256.27px;top:542.41px;font-size:14.928px;line-height:14.928px;transform:scaleX(1.0450);color:#000;-webkit-text-stroke:0.15px #000;">23,083,333.33</div></div>
<div style="left:79px;top:0px;width:1401px;height:858px;overflow:hidden;"><div class="t" style="left:1399.27px;top:542.41px;font-size:14.928px;line-height:14.928px;transform:scaleX(1.0450);color:#000;-webkit-text-stroke:0.15px #000;">26,501,602.56</div></div>
<div style="left:79px;top:0px;width:1401px;height:858px;overflow:hidden;"><div class="t" style="left:421.85px;top:564.91px;font-size:14.928px;line-height:14.928px;transform:scaleX(1.0450);color:#000;-webkit-text-stroke:0.15px #000;">2,000,000.00</div></div>
<div style="left:79px;top:0px;width:1401px;height:858px;overflow:hidden;"><div class="t" style="left:562.35px;top:564.91px;font-size:14.928px;line-height:14.928px;transform:scaleX(1.0450);color:#000;-webkit-text-stroke:0.15px #000;">2,000,000.00</div></div>
<div style="left:79px;top:0px;width:1401px;height:858px;overflow:hidden;"><div class="t" style="left:702.85px;top:564.91px;font-size:14.928px;line-height:14.928px;transform:scaleX(1.0450);color:#000;-webkit-text-stroke:0.15px #000;">2,000,000.00</div></div>
<div style="left:79px;top:0px;width:1401px;height:858px;overflow:hidden;"><div class="t" style="left:843.35px;top:564.91px;font-size:14.928px;line-height:14.928px;transform:scaleX(1.0450);color:#000;-webkit-text-stroke:0.15px #000;">2,000,000.00</div></div>
<div style="left:79px;top:0px;width:1401px;height:858px;overflow:hidden;"><div class="t" style="left:983.85px;top:564.91px;font-size:14.928px;line-height:14.928px;transform:scaleX(1.0450);color:#000;-webkit-text-stroke:0.15px #000;">2,000,000.00</div></div>
<div style="left:79px;top:0px;width:1401px;height:858px;overflow:hidden;"><div class="t" style="left:1124.35px;top:564.91px;font-size:14.928px;line-height:14.928px;transform:scaleX(1.0450);color:#000;-webkit-text-stroke:0.15px #000;">2,000,000.00</div></div>
<div style="left:79px;top:0px;width:1401px;height:858px;overflow:hidden;"><div class="t" style="left:1264.85px;top:564.91px;font-size:14.928px;line-height:14.928px;transform:scaleX(1.0450);color:#000;-webkit-text-stroke:0.15px #000;">2,000,000.00</div></div>
<div style="left:79px;top:0px;width:1401px;height:858px;overflow:hidden;"><div class="t" style="left:1407.85px;top:564.91px;font-size:14.928px;line-height:14.928px;transform:scaleX(1.0450);color:#000;-webkit-text-stroke:0.15px #000;">2,000,000.00</div></div>
<div style="left:79px;top:0px;width:1401px;height:858px;overflow:hidden;"><div class="t" style="left:434.87px;top:587.51px;font-size:14.928px;line-height:14.928px;transform:scaleX(1.0450);color:#000;-webkit-text-stroke:0.15px #000;">200,000.00</div></div>
<div style="left:79px;top:0px;width:1401px;height:858px;overflow:hidden;"><div class="t" style="left:575.37px;top:587.51px;font-size:14.928px;line-height:14.928px;transform:scaleX(1.0450);color:#000;-webkit-text-stroke:0.15px #000;">200,000.00</div></div>
<div style="left:79px;top:0px;width:1401px;height:858px;overflow:hidden;"><div class="t" style="left:715.87px;top:587.51px;font-size:14.928px;line-height:14.928px;transform:scaleX(1.0450);color:#000;-webkit-text-stroke:0.15px #000;">200,000.00</div></div>
<div style="left:79px;top:0px;width:1401px;height:858px;overflow:hidden;"><div class="t" style="left:856.37px;top:587.51px;font-size:14.928px;line-height:14.928px;transform:scaleX(1.0450);color:#000;-webkit-text-stroke:0.15px #000;">200,000.00</div></div>
<div style="left:79px;top:0px;width:1401px;height:858px;overflow:hidden;"><div class="t" style="left:996.87px;top:587.51px;font-size:14.928px;line-height:14.928px;transform:scaleX(1.0450);color:#000;-webkit-text-stroke:0.15px #000;">200,000.00</div></div>
<div style="left:79px;top:0px;width:1401px;height:858px;overflow:hidden;"><div class="t" style="left:1137.37px;top:587.51px;font-size:14.928px;line-height:14.928px;transform:scaleX(1.0450);color:#000;-webkit-text-stroke:0.15px #000;">200,000.00</div></div>
<div style="left:79px;top:0px;width:1401px;height:858px;overflow:hidden;"><div class="t" style="left:1277.87px;top:587.51px;font-size:14.928px;line-height:14.928px;transform:scaleX(1.0450);color:#000;-webkit-text-stroke:0.15px #000;">200,000.00</div></div>
<div style="left:79px;top:0px;width:1401px;height:858px;overflow:hidden;"><div class="t" style="left:1420.87px;top:587.51px;font-size:14.928px;line-height:14.928px;transform:scaleX(1.0450);color:#000;-webkit-text-stroke:0.15px #000;">200,000.00</div></div>
<div style="left:79px;top:0px;width:1401px;height:858px;overflow:hidden;"><div class="t" style="left:421.85px;top:610.61px;font-size:14.928px;line-height:14.928px;transform:scaleX(1.0450);color:#000;-webkit-text-stroke:0.15px #000;">1,000,000.00</div></div>
<div style="left:79px;top:0px;width:1401px;height:858px;overflow:hidden;"><div class="t" style="left:562.35px;top:610.61px;font-size:14.928px;line-height:14.928px;transform:scaleX(1.0450);color:#000;-webkit-text-stroke:0.15px #000;">1,000,000.00</div></div>
<div style="left:79px;top:0px;width:1401px;height:858px;overflow:hidden;"><div class="t" style="left:702.85px;top:610.61px;font-size:14.928px;line-height:14.928px;transform:scaleX(1.0450);color:#000;-webkit-text-stroke:0.15px #000;">1,000,000.00</div></div>
<div style="left:79px;top:0px;width:1401px;height:858px;overflow:hidden;"><div class="t" style="left:843.35px;top:610.61px;font-size:14.928px;line-height:14.928px;transform:scaleX(1.0450);color:#000;-webkit-text-stroke:0.15px #000;">1,000,000.00</div></div>
<div style="left:79px;top:0px;width:1401px;height:858px;overflow:hidden;"><div class="t" style="left:983.85px;top:610.61px;font-size:14.928px;line-height:14.928px;transform:scaleX(1.0450);color:#000;-webkit-text-stroke:0.15px #000;">1,000,000.00</div></div>
<div style="left:79px;top:0px;width:1401px;height:858px;overflow:hidden;"><div class="t" style="left:1124.35px;top:610.61px;font-size:14.928px;line-height:14.928px;transform:scaleX(1.0450);color:#000;-webkit-text-stroke:0.15px #000;">1,000,000.00</div></div>
<div style="left:79px;top:0px;width:1401px;height:858px;overflow:hidden;"><div class="t" style="left:1264.85px;top:610.61px;font-size:14.928px;line-height:14.928px;transform:scaleX(1.0450);color:#000;-webkit-text-stroke:0.15px #000;">1,000,000.00</div></div>
<div style="left:79px;top:0px;width:1401px;height:858px;overflow:hidden;"><div class="t" style="left:1407.85px;top:610.61px;font-size:14.928px;line-height:14.928px;transform:scaleX(1.0450);color:#000;-webkit-text-stroke:0.15px #000;">1,000,000.00</div></div>
<div style="left:79px;top:0px;width:1401px;height:858px;overflow:hidden;"><div class="t" style="left:434.87px;top:633.21px;font-size:14.928px;line-height:14.928px;transform:scaleX(1.0450);color:#000;-webkit-text-stroke:0.15px #000;">300,000.00</div></div>
<div style="left:79px;top:0px;width:1401px;height:858px;overflow:hidden;"><div class="t" style="left:575.37px;top:633.21px;font-size:14.928px;line-height:14.928px;transform:scaleX(1.0450);color:#000;-webkit-text-stroke:0.15px #000;">300,000.00</div></div>
<div style="left:79px;top:0px;width:1401px;height:858px;overflow:hidden;"><div class="t" style="left:715.87px;top:633.21px;font-size:14.928px;line-height:14.928px;transform:scaleX(1.0450);color:#000;-webkit-text-stroke:0.15px #000;">300,000.00</div></div>
<div style="left:79px;top:0px;width:1401px;height:858px;overflow:hidden;"><div class="t" style="left:856.37px;top:633.21px;font-size:14.928px;line-height:14.928px;transform:scaleX(1.0450);color:#000;-webkit-text-stroke:0.15px #000;">300,000.00</div></div>
<div style="left:79px;top:0px;width:1401px;height:858px;overflow:hidden;"><div class="t" style="left:996.87px;top:633.21px;font-size:14.928px;line-height:14.928px;transform:scaleX(1.0450);color:#000;-webkit-text-stroke:0.15px #000;">300,000.00</div></div>
<div style="left:79px;top:0px;width:1401px;height:858px;overflow:hidden;"><div class="t" style="left:1137.37px;top:633.21px;font-size:14.928px;line-height:14.928px;transform:scaleX(1.0450);color:#000;-webkit-text-stroke:0.15px #000;">300,000.00</div></div>
<div style="left:79px;top:0px;width:1401px;height:858px;overflow:hidden;"><div class="t" style="left:1277.87px;top:633.21px;font-size:14.928px;line-height:14.928px;transform:scaleX(1.0450);color:#000;-webkit-text-stroke:0.15px #000;">300,000.00</div></div>
<div style="left:79px;top:0px;width:1401px;height:858px;overflow:hidden;"><div class="t" style="left:1420.87px;top:633.21px;font-size:14.928px;line-height:14.928px;transform:scaleX(1.0450);color:#000;-webkit-text-stroke:0.15px #000;">300,000.00</div></div>
<div style="left:79px;top:0px;width:1401px;height:858px;overflow:hidden;"><div class="t" style="left:434.87px;top:655.71px;font-size:14.928px;line-height:14.928px;transform:scaleX(1.0450);color:#000;-webkit-text-stroke:0.15px #000;">500,000.00</div></div>
<div style="left:79px;top:0px;width:1401px;height:858px;overflow:hidden;"><div class="t" style="left:575.37px;top:655.71px;font-size:14.928px;line-height:14.928px;transform:scaleX(1.0450);color:#000;-webkit-text-stroke:0.15px #000;">500,000.00</div></div>
<div style="left:79px;top:0px;width:1401px;height:858px;overflow:hidden;"><div class="t" style="left:715.87px;top:655.71px;font-size:14.928px;line-height:14.928px;transform:scaleX(1.0450);color:#000;-webkit-text-stroke:0.15px #000;">500,000.00</div></div>
<div style="left:79px;top:0px;width:1401px;height:858px;overflow:hidden;"><div class="t" style="left:856.37px;top:655.71px;font-size:14.928px;line-height:14.928px;transform:scaleX(1.0450);color:#000;-webkit-text-stroke:0.15px #000;">500,000.00</div></div>
<div style="left:79px;top:0px;width:1401px;height:858px;overflow:hidden;"><div class="t" style="left:996.87px;top:655.71px;font-size:14.928px;line-height:14.928px;transform:scaleX(1.0450);color:#000;-webkit-text-stroke:0.15px #000;">500,000.00</div></div>
<div style="left:79px;top:0px;width:1401px;height:858px;overflow:hidden;"><div class="t" style="left:1137.37px;top:655.71px;font-size:14.928px;line-height:14.928px;transform:scaleX(1.0450);color:#000;-webkit-text-stroke:0.15px #000;">500,000.00</div></div>
<div style="left:79px;top:0px;width:1401px;height:858px;overflow:hidden;"><div class="t" style="left:1277.87px;top:655.71px;font-size:14.928px;line-height:14.928px;transform:scaleX(1.0450);color:#000;-webkit-text-stroke:0.15px #000;">500,000.00</div></div>
<div style="left:79px;top:0px;width:1401px;height:858px;overflow:hidden;"><div class="t" style="left:1420.87px;top:655.71px;font-size:14.928px;line-height:14.928px;transform:scaleX(1.0450);color:#000;-webkit-text-stroke:0.15px #000;">500,000.00</div></div>
<div style="left:79px;top:0px;width:1401px;height:858px;overflow:hidden;"><div class="t" style="left:421.85px;top:678.21px;font-size:14.928px;line-height:14.928px;transform:scaleX(1.0450);color:#000;-webkit-text-stroke:0.15px #000;">1,000,000.00</div></div>
<div style="left:79px;top:0px;width:1401px;height:858px;overflow:hidden;"><div class="t" style="left:562.35px;top:678.21px;font-size:14.928px;line-height:14.928px;transform:scaleX(1.0450);color:#000;-webkit-text-stroke:0.15px #000;">1,000,000.00</div></div>
<div style="left:79px;top:0px;width:1401px;height:858px;overflow:hidden;"><div class="t" style="left:702.85px;top:678.21px;font-size:14.928px;line-height:14.928px;transform:scaleX(1.0450);color:#000;-webkit-text-stroke:0.15px #000;">1,000,000.00</div></div>
<div style="left:79px;top:0px;width:1401px;height:858px;overflow:hidden;"><div class="t" style="left:843.35px;top:678.21px;font-size:14.928px;line-height:14.928px;transform:scaleX(1.0450);color:#000;-webkit-text-stroke:0.15px #000;">1,000,000.00</div></div>
<div style="left:79px;top:0px;width:1401px;height:858px;overflow:hidden;"><div class="t" style="left:983.85px;top:678.21px;font-size:14.928px;line-height:14.928px;transform:scaleX(1.0450);color:#000;-webkit-text-stroke:0.15px #000;">1,000,000.00</div></div>
<div style="left:79px;top:0px;width:1401px;height:858px;overflow:hidden;"><div class="t" style="left:1124.35px;top:678.21px;font-size:14.928px;line-height:14.928px;transform:scaleX(1.0450);color:#000;-webkit-text-stroke:0.15px #000;">1,000,000.00</div></div>
<div style="left:79px;top:0px;width:1401px;height:858px;overflow:hidden;"><div class="t" style="left:1264.85px;top:678.21px;font-size:14.928px;line-height:14.928px;transform:scaleX(1.0450);color:#000;-webkit-text-stroke:0.15px #000;">1,000,000.00</div></div>
<div style="left:79px;top:0px;width:1401px;height:858px;overflow:hidden;"><div class="t" style="left:1407.85px;top:678.21px;font-size:14.928px;line-height:14.928px;transform:scaleX(1.0450);color:#000;-webkit-text-stroke:0.15px #000;">1,000,000.00</div></div>
<div style="left:79px;top:0px;width:1401px;height:858px;overflow:hidden;"><div class="t" style="left:413.19px;top:701.01px;font-size:14.928px;line-height:14.928px;transform:scaleX(1.0450);color:#000;-webkit-text-stroke:0.15px #000;">40,000,000.00</div></div>
<div style="left:79px;top:0px;width:1401px;height:858px;overflow:hidden;"><div class="t" style="left:631.04px;top:701.26px;font-size:14.638px;line-height:14.638px;transform:scaleX(1.0038);color:#000;-webkit-text-stroke:0.15px #000;">-</div></div>
<div style="left:79px;top:0px;width:1401px;height:858px;overflow:hidden;"><div class="t" style="left:771.54px;top:701.26px;font-size:14.638px;line-height:14.638px;transform:scaleX(1.0038);color:#000;-webkit-text-stroke:0.15px #000;">-</div></div>
<div style="left:79px;top:0px;width:1401px;height:858px;overflow:hidden;"><div class="t" style="left:912.04px;top:701.26px;font-size:14.638px;line-height:14.638px;transform:scaleX(1.0038);color:#000;-webkit-text-stroke:0.15px #000;">-</div></div>
<div style="left:79px;top:0px;width:1401px;height:858px;overflow:hidden;"><div class="t" style="left:1052.54px;top:701.26px;font-size:14.638px;line-height:14.638px;transform:scaleX(1.0038);color:#000;-webkit-text-stroke:0.15px #000;">-</div></div>
<div style="left:79px;top:0px;width:1401px;height:858px;overflow:hidden;"><div class="t" style="left:1193.04px;top:701.26px;font-size:14.638px;line-height:14.638px;transform:scaleX(1.0038);color:#000;-webkit-text-stroke:0.15px #000;">-</div></div>
<div style="left:79px;top:0px;width:1401px;height:858px;overflow:hidden;"><div class="t" style="left:1333.54px;top:701.26px;font-size:14.638px;line-height:14.638px;transform:scaleX(1.0038);color:#000;-webkit-text-stroke:0.15px #000;">-</div></div>
<div style="left:79px;top:0px;width:1401px;height:858px;overflow:hidden;"><div class="t" style="left:1476.54px;top:701.26px;font-size:14.638px;line-height:14.638px;transform:scaleX(1.0038);color:#000;-webkit-text-stroke:0.15px #000;">-</div></div>
<div style="left:79px;top:0px;width:1401px;height:858px;overflow:hidden;"><div class="t" style="left:490.54px;top:724.16px;font-size:14.638px;line-height:14.638px;transform:scaleX(1.0038);color:#000;-webkit-text-stroke:0.15px #000;">-</div></div>
<div style="left:79px;top:0px;width:1401px;height:858px;overflow:hidden;"><div class="t" style="left:562.58px;top:723.91px;font-size:14.928px;line-height:14.928px;transform:scaleX(1.0450);color:#000;-webkit-text-stroke:0.15px #000;">2,291,666.67</div></div>
<div style="left:79px;top:0px;width:1401px;height:858px;overflow:hidden;"><div class="t" style="left:702.92px;top:723.91px;font-size:14.928px;line-height:14.928px;transform:scaleX(1.0450);color:#000;-webkit-text-stroke:0.15px #000;">2,243,160.53</div></div>
<div style="left:79px;top:0px;width:1401px;height:858px;overflow:hidden;"><div class="t" style="left:843.58px;top:723.91px;font-size:14.928px;line-height:14.928px;transform:scaleX(1.0450);color:#000;-webkit-text-stroke:0.15px #000;">2,194,496.12</div></div>
<div style="left:79px;top:0px;width:1401px;height:858px;overflow:hidden;"><div class="t" style="left:983.92px;top:723.91px;font-size:14.928px;line-height:14.928px;transform:scaleX(1.0450);color:#000;-webkit-text-stroke:0.15px #000;">2,145,672.93</div></div>
<div style="left:79px;top:0px;width:1401px;height:858px;overflow:hidden;"><div class="t" style="left:1124.42px;top:723.91px;font-size:14.928px;line-height:14.928px;transform:scaleX(1.0450);color:#000;-webkit-text-stroke:0.15px #000;">2,096,690.45</div></div>
<div style="left:79px;top:0px;width:1401px;height:858px;overflow:hidden;"><div class="t" style="left:1264.77px;top:723.91px;font-size:14.928px;line-height:14.928px;transform:scaleX(1.0450);color:#000;-webkit-text-stroke:0.15px #000;">2,047,548.14</div></div>
<div style="left:79px;top:0px;width:1401px;height:858px;overflow:hidden;"><div class="t" style="left:1407.85px;top:723.91px;font-size:14.928px;line-height:14.928px;transform:scaleX(1.0450);color:#000;-webkit-text-stroke:0.15px #000;">1,998,239.30</div></div>
<div style="left:79px;top:0px;width:1401px;height:858px;overflow:hidden;"><div class="t" style="left:410.81px;top:746.01px;font-size:14.928px;line-height:14.928px;transform:scaleX(1.0650);color:#000;font-weight:bold;">46,310,897.44</div></div>
<div style="left:79px;top:0px;width:1401px;height:858px;overflow:hidden;"><div class="t" style="left:551.31px;top:746.01px;font-size:14.928px;line-height:14.928px;transform:scaleX(1.0650);color:#000;font-weight:bold;">13,243,589.74</div></div>
<div style="left:79px;top:0px;width:1401px;height:858px;overflow:hidden;"><div class="t" style="left:691.81px;top:746.01px;font-size:14.928px;line-height:14.928px;transform:scaleX(1.0650);color:#000;font-weight:bold;">16,630,981.04</div></div>
<div style="left:79px;top:0px;width:1401px;height:858px;overflow:hidden;"><div class="t" style="left:832.31px;top:746.01px;font-size:14.928px;line-height:14.928px;transform:scaleX(1.0650);color:#000;font-weight:bold;">20,015,008.94</div></div>
<div style="left:79px;top:0px;width:1401px;height:858px;overflow:hidden;"><div class="t" style="left:973.21px;top:746.01px;font-size:14.928px;line-height:14.928px;transform:scaleX(1.0650);color:#000;font-weight:bold;">23,384,454.98</div></div>
<div style="left:79px;top:0px;width:1401px;height:858px;overflow:hidden;"><div class="t" style="left:1113.63px;top:746.01px;font-size:14.928px;line-height:14.928px;transform:scaleX(1.0650);color:#000;font-weight:bold;">26,761,754.55</div></div>
<div style="left:79px;top:0px;width:1401px;height:858px;overflow:hidden;"><div class="t" style="left:1254.37px;top:746.01px;font-size:14.928px;line-height:14.928px;transform:scaleX(1.0650);color:#000;font-weight:bold;">30,130,881.47</div></div>
<div style="left:79px;top:0px;width:1401px;height:858px;overflow:hidden;"><div class="t" style="left:1397.29px;top:746.01px;font-size:14.928px;line-height:14.928px;transform:scaleX(1.0650);color:#000;font-weight:bold;">33,499,841.86</div></div>
<div style="left:79px;top:0px;width:1401px;height:858px;overflow:hidden;"><div class="t" style="left:406.72px;top:768.21px;font-size:14.928px;line-height:14.928px;transform:scaleX(1.0503);color:#d0141c;font-weight:bold;">(42,220,897.44)</div></div>
<div style="left:79px;top:0px;width:1401px;height:858px;overflow:hidden;"><div class="t" style="left:560.61px;top:768.21px;font-size:14.928px;line-height:14.928px;transform:scaleX(1.0650);color:#000;font-weight:bold;">5,326,410.26</div></div>
<div style="left:79px;top:0px;width:1401px;height:858px;overflow:hidden;"><div class="t" style="left:692.29px;top:768.21px;font-size:14.928px;line-height:14.928px;transform:scaleX(1.0650);color:#000;font-weight:bold;">12,659,018.96</div></div>
<div style="left:79px;top:0px;width:1401px;height:858px;overflow:hidden;"><div class="t" style="left:832.79px;top:768.21px;font-size:14.928px;line-height:14.928px;transform:scaleX(1.0650);color:#000;font-weight:bold;">19,984,991.06</div></div>
<div style="left:79px;top:0px;width:1401px;height:858px;overflow:hidden;"><div class="t" style="left:973.37px;top:768.21px;font-size:14.928px;line-height:14.928px;transform:scaleX(1.0650);color:#000;font-weight:bold;">27,280,545.02</div></div>
<div style="left:79px;top:0px;width:1401px;height:858px;overflow:hidden;"><div class="t" style="left:1113.63px;top:768.21px;font-size:14.928px;line-height:14.928px;transform:scaleX(1.0650);color:#000;font-weight:bold;">34,593,245.45</div></div>
<div style="left:79px;top:0px;width:1401px;height:858px;overflow:hidden;"><div class="t" style="left:1255.16px;top:768.21px;font-size:14.928px;line-height:14.928px;transform:scaleX(1.0650);color:#000;font-weight:bold;">41,889,118.53</div></div>
<div style="left:79px;top:0px;width:1401px;height:858px;overflow:hidden;"><div class="t" style="left:1396.81px;top:768.21px;font-size:14.928px;line-height:14.928px;transform:scaleX(1.0650);color:#000;font-weight:bold;">49,185,158.14</div></div>
<div style="left:1480px;top:136px;width:20px;height:664px;background:#dadada;"></div>
<div style="left:1480px;top:136px;width:1px;height:664px;background:#bdbdbd;"></div>
<div style="left:1481px;top:136px;width:1px;height:664px;background:#f4f4f4;"></div>
<div style="left:1482px;top:136px;width:1px;height:664px;background:#c2c2c2;"></div>
<div style="left:1483px;top:136px;width:17px;height:150px;background:#fff;"></div>
<div style="left:1482px;top:135px;width:18px;height:1px;background:#d0d0d0;"></div>
<div style="left:1483px;top:155px;width:17px;height:1px;background:#c8c8c8;"></div>
<svg style="left:1483px;top:136px" width="17" height="20" viewBox="1483 136 17 20"><path d="M1487.8 147.3h8l-4-4.5z" fill="#555"/></svg>
<div style="left:9px;top:800px;width:1046px;height:26px;background:#e9e9e9;"></div>
<div style="left:9px;top:800px;width:1046px;height:1px;background:#c6c6c6;"></div>
<div style="left:9px;top:826px;width:1046px;height:1px;background:#d6d6d6;"></div>
<svg style="left:9px;top:800px" width="110" height="26" viewBox="9 800 110 26"><path d="M32.8 808.6v8.6l-7.2-4.3z" fill="#1e5c39"/><path d="M53 808.6v8.6l5.6-4.3z" fill="#1e5c39"/><g fill="#333"><circle cx="77.6" cy="815.8" r="1.35"/><circle cx="82.4" cy="815.8" r="1.35"/><circle cx="87.2" cy="815.8" r="1.35"/></g></svg>
<div style="left:96px;top:803px;width:1px;height:20px;background:#c6c6c6;"></div>
<div class="t" style="left:112.70px;top:803.62px;font-size:15.507px;line-height:15.507px;transform:scaleX(1.0027);color:#555;">Sales Projection - Monthly</div>
<div style="left:311px;top:803px;width:1px;height:20px;background:#c6c6c6;"></div>
<div class="t" style="left:327.75px;top:803.62px;font-size:15.507px;line-height:15.507px;transform:scaleX(1.0072);color:#555;">PnL Projection - Monthly</div>
<div style="left:515px;top:800px;width:252px;height:23px;background:#fff;"></div>
<div style="left:515px;top:800px;width:1px;height:23px;background:#c6c6c6;"></div>
<div style="left:766px;top:800px;width:1px;height:23px;background:#c6c6c6;"></div>
<div style="left:515px;top:822px;width:252px;height:2px;background:#217346;"></div>
<div class="t" style="left:523.78px;top:803.62px;font-size:15.507px;line-height:15.507px;transform:scaleX(1.0052);color:#217346;font-weight:bold;">Cash Flow Projection - Monthly</div>
<div class="t" style="left:779.32px;top:803.62px;font-size:15.507px;line-height:15.507px;transform:scaleX(0.9540);color:#555;">PnL Proj</div>
<svg style="left:835px;top:800px" width="80" height="26" viewBox="835 800 80 26"><g fill="#333"><circle cx="843.6" cy="815.8" r="1.35"/><circle cx="848.4" cy="815.8" r="1.35"/><circle cx="853.2" cy="815.8" r="1.35"/></g><circle cx="875" cy="813" r="8" fill="none" stroke="#777" stroke-width="1.3"/><path d="M875 808.5v9M870.5 813h9" stroke="#555" stroke-width="1.5"/><g fill="#aaa"><circle cx="901.8" cy="807.8" r="1.1"/><circle cx="901.8" cy="812.8" r="1.1"/><circle cx="901.8" cy="817.8" r="1.1"/></g></svg>
<div style="left:916px;top:803px;width:139px;height:20px;background:#fff;box-sizing:border-box;border:1px solid #c6c6c6;"></div>
<div style="left:935px;top:803px;width:1px;height:20px;background:#c6c6c6;"></div>
<svg style="left:916px;top:803px" width="20" height="20" viewBox="916 803 20 20"><path d="M929 808.7v7.6l-4.6-3.8z" fill="#444"/></svg>
<div style="left:9px;top:827px;width:1046px;height:21px;background:#f3f3f3;"></div>
<svg style="left:9px;top:826px" width="30" height="22" viewBox="9 826 30 22"><circle cx="15.8" cy="834.5" r="3.3" fill="#555"/><rect x="14.5" y="834.8" width="13" height="11" fill="none" stroke="#666" stroke-width="1"/><rect x="20" y="832" width="8" height="2.6" fill="#555"/><g fill="#888"><rect x="17" y="838" width="2" height="1"/><rect x="20.5" y="838" width="2" height="1"/><rect x="24" y="838" width="2" height="1"/><rect x="17" y="840.5" width="2" height="1"/><rect x="20.5" y="840.5" width="2" height="1"/><rect x="24" y="840.5" width="2" height="1"/><rect x="17" y="843" width="2" height="1"/><rect x="20.5" y="843" width="2" height="1"/><rect x="24" y="843" width="2" height="1"/></g></svg>
<div style="left:1054px;top:755px;width:455px;height:101px;background:#1f1b12;border-top-left-radius:32px;border-bottom-right-radius:6px;"></div>
<div class="t" style="left:1106.20px;top:793.00px;font-size:34.783px;line-height:34.783px;transform:scaleX(0.8615);color:#fff;-webkit-text-stroke:0.3px #fff;">EXCEL-TEMPLATES.NET</div>
</body></html>
